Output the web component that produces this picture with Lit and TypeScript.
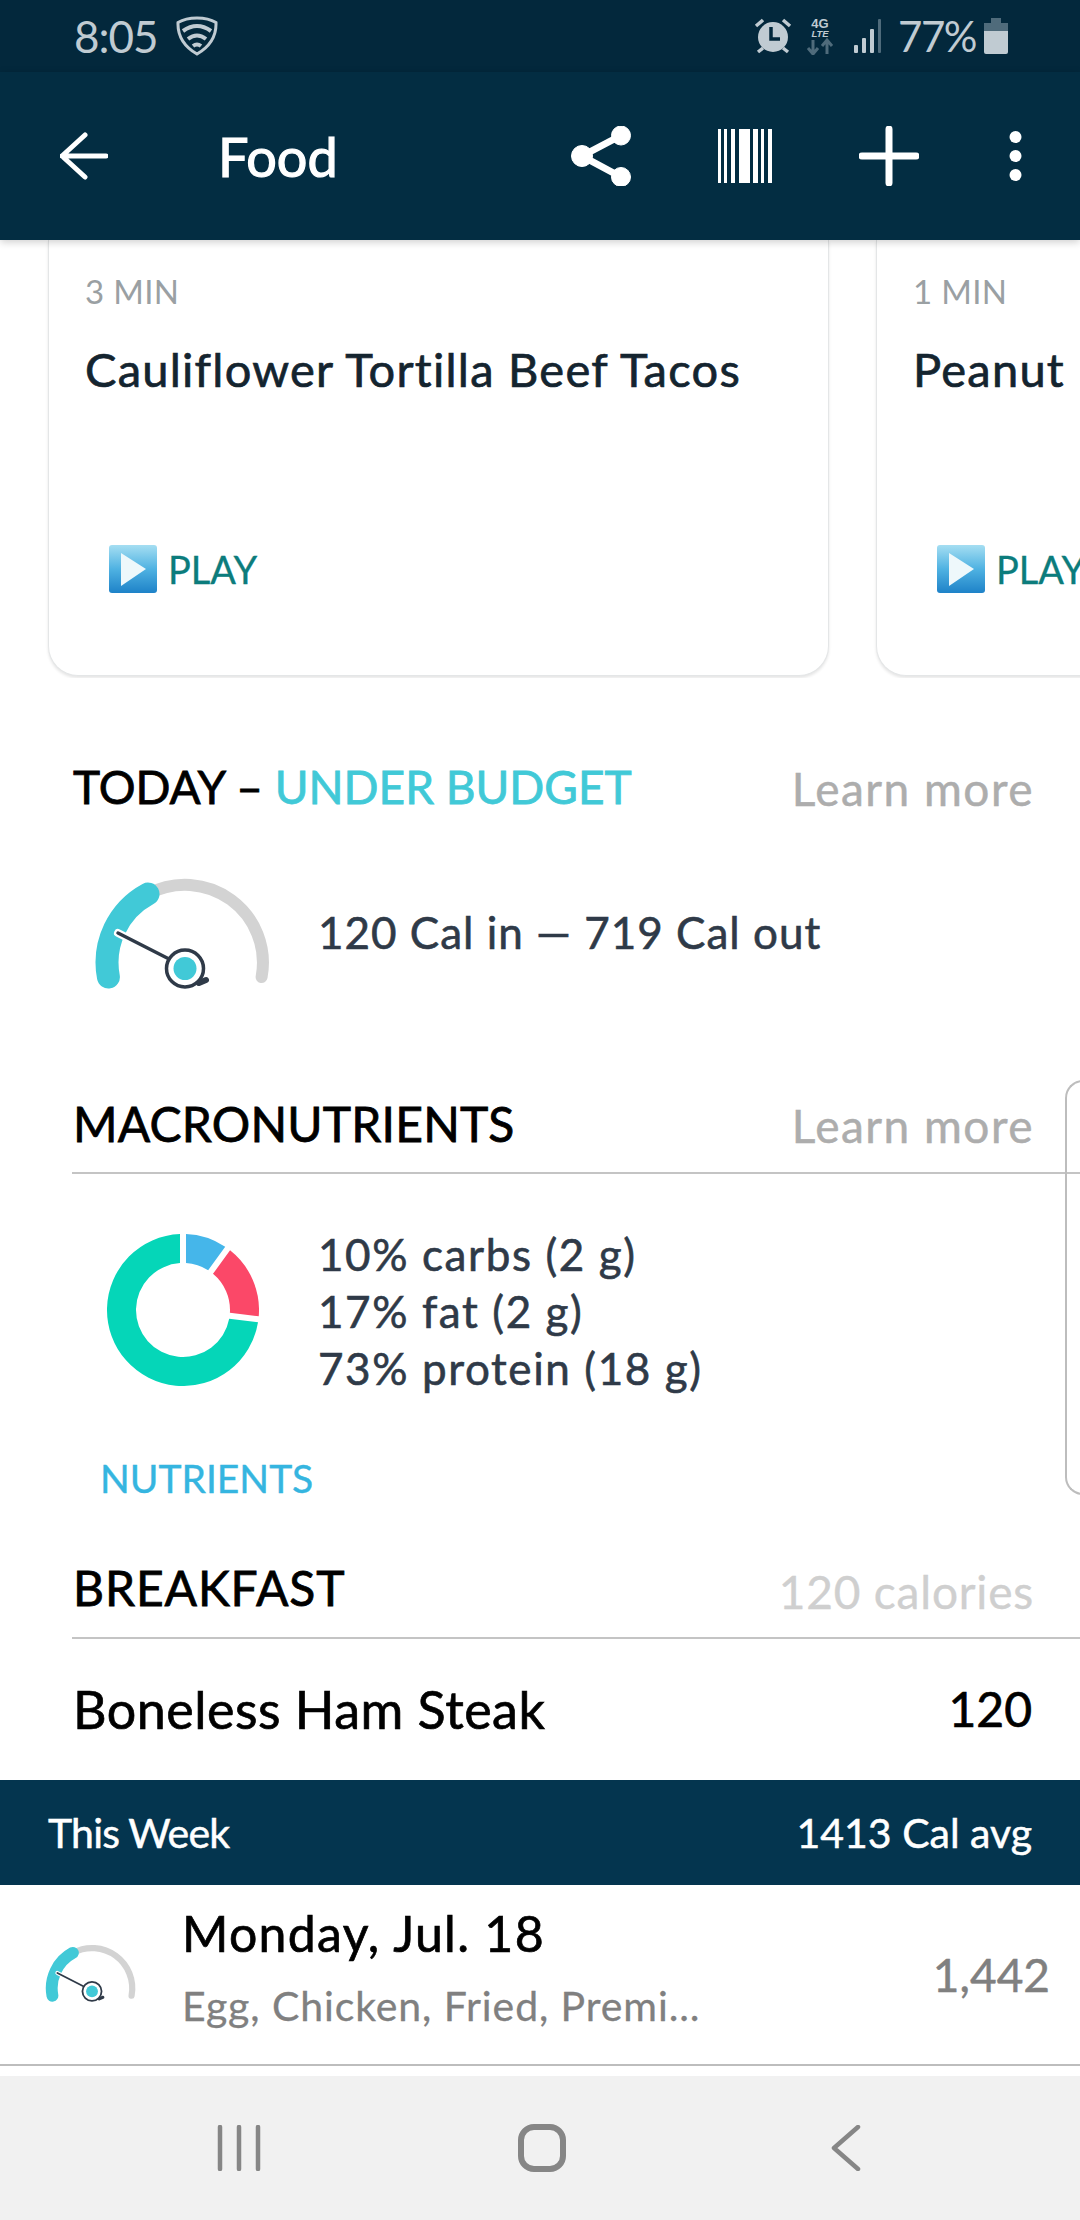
import { LitElement, html, css, svg } from "lit";
import { customElement } from "lit/decorators.js";

const gauge = (cls: string) => html`<svg class=${cls} viewBox="-90 -90 180 120">
  <path d="M76.6 14 A78 78 0 0 0 -37 -69" fill="none" stroke="#d3d3d3" stroke-width="12" stroke-linecap="round"/>
  <path d="M-76.6 14 A78 78 0 0 1 -37 -69" fill="none" stroke="#41c9d7" stroke-width="23" stroke-linecap="round"/>
  <path d="M-67 -30 L-12 -2" stroke="#fff" stroke-width="8" stroke-linecap="round"/>
  <path d="M-67 -30 L-12 -2" stroke="#2f3a48" stroke-width="3.5" stroke-linecap="round"/>
  <path d="M14 20 L21 17" stroke="#2f3a48" stroke-width="6" stroke-linecap="round"/>
  <circle cx="0" cy="5.5" r="18.5" fill="#fff" stroke="#2f3a48" stroke-width="3.5"/>
  <circle cx="0" cy="5.5" r="11.5" fill="#41c9d7"/>
</svg>`;

const play = () => html`<svg class="play-ic" viewBox="0 0 48 48">
  <defs><linearGradient id="pg" x1="0" y1="0" x2="0" y2="1">
    <stop offset="0" stop-color="#a5def2"/><stop offset=".5" stop-color="#4fb2e2"/><stop offset="1" stop-color="#1e82c8"/>
  </linearGradient></defs>
  <rect width="48" height="48" rx="3" fill="url(#pg)"/>
  <path d="M13 8 L38 24 L13 41 Z" fill="#eef8fb" transform="translate(-1 0)"/>
</svg>`;

function arcSeg(a0: number, a1: number, gap: number) {
  const R = 76, r = 47;
  const p = (rad: number, deg: number) => {
    const t = (deg * Math.PI) / 180;
    return [rad * Math.sin(t), -rad * Math.cos(t)];
  };
  const ao = (gap / R) * 57.3, ai = (gap / r) * 57.3;
  const [x1, y1] = p(R, a0 + ao), [x2, y2] = p(R, a1 - ao), [x3, y3] = p(r, a1 - ai), [x4, y4] = p(r, a0 + ai);
  const big = a1 - a0 > 180 ? 1 : 0;
  return `M${x1} ${y1} A${R} ${R} 0 ${big} 1 ${x2} ${y2} L${x3} ${y3} A${r} ${r} 0 ${big} 0 ${x4} ${y4} Z`;
}

@customElement("app-root")
export class AppRoot extends LitElement {
  static styles = css`
    :host { display: block; width: 1080px; height: 2220px; overflow: hidden; background: #fff; font-family: "Lato", "Noto Sans", sans-serif; color: #000; }
    .page { display: flex; flex-direction: column; height: 2220px; }
    .status { height: 72px; flex: none; background: #03283c; color: #c0cbd2; display: flex; align-items: center; padding: 0 72px 0 74px; font-size: 44px; }
    .status .time { letter-spacing: -1px; width: 102px; }
    .status .sp { flex: 1; }
    .status svg { display: block; flex: none; }
    .pct { margin: 0 8px 0 13px; letter-spacing: -1.5px; font-size: 42px; }
    .four { margin-left: 13px; }
    .sig { margin-left: 19px; }
    .appbar { height: 168px; flex: none; background: #032d42; display: flex; align-items: center; padding: 0 58px 0 60px; color: #fff; position: relative; z-index: 2; box-shadow: 0 2px 8px rgba(0,0,0,.2); }
    .appbar svg { display: block; flex: none; }
    .title { flex: 1; margin-left: 110px; font-size: 54px; font-weight: 400; letter-spacing: 0; -webkit-text-stroke: 1.2px #fff; }
    .bar-ic { margin-left: 87px; }
    .plus-ic { margin-left: 87px; }
    .dots-ic { margin-left: 90px; }
    .main { flex: 1; position: relative; overflow: hidden; min-height: 0; }
    .carousel { height: 438px; display: flex; gap: 47px; padding-left: 48px; overflow: hidden; }
    .card { flex: none; width: 781px; height: 436px; box-sizing: border-box; background: #fff; border: 1px solid #e4e6e7; border-top: 0; border-radius: 0 0 30px 30px; box-shadow: 0 2px 3px rgba(0,0,0,.1); padding: 29px 0 0 36px; display: flex; flex-direction: column; }
    .min { font-size: 33px; line-height: 44px; color: #9aa0a3; letter-spacing: .3px; }
    .name { font-size: 47px; line-height: 60px; margin-top: 26px; color: #14242f; white-space: nowrap; letter-spacing: 1.25px; -webkit-text-stroke: .7px #14242f; }
    .playrow { display: flex; align-items: center; margin: 146px 0 0 24px; color: #0c7c7c; font-size: 38px; gap: 11px; -webkit-text-stroke: .3px #0c7c7c; }
    .play-ic { width: 48px; height: 48px; flex: none; display: block; }
    .head { display: flex; justify-content: space-between; align-items: center; padding: 0 48px 0 73px; height: 60px; font-size: 48px; -webkit-text-stroke: .8px #000; white-space: nowrap; }
    .head .more { font-size: 46px; color: #adadad; -webkit-text-stroke: .5px #adadad; letter-spacing: 1.5px; padding-top: 4px; margin-right: -2px; }
    .today { margin-top: 78px; font-size: 46px; }
    .under { color: #41c9d7; -webkit-text-stroke: .8px #41c9d7; }
    .gauge-row { display: flex; align-items: flex-start; gap: 43px; padding-left: 95px; margin-top: 57px; height: 120px; }
    .gauge-big { width: 180px; height: 120px; flex: none; display: block; }
    .body { font-size: 44px; color: #2f3a48; -webkit-text-stroke: .6px #2f3a48; line-height: 57px; white-space: nowrap; }
    .gauge-row .body { margin-top: 31px; letter-spacing: 1px; }
    .macro { margin-top: 100px; letter-spacing: .2px; }
    .rule { height: 2px; background: #c4c4c4; margin: 19px 0 0 72px; }
    .macro-row { display: flex; gap: 59px; padding-left: 107px; margin-top: 60px; align-items: flex-start; }
    .donut { width: 152px; height: 152px; flex: none; display: block; }
    .macro-row .body { margin-top: -8px; letter-spacing: 1.6px; }
    .nutr { color: #35b5e0; font-size: 39px; line-height: 50px; margin: 56px 0 0 100px; -webkit-text-stroke: .4px #35b5e0; }
    .bk { margin-top: 54px; letter-spacing: .9px; }
    .bk .more { color: #cfcfcf; -webkit-text-stroke: .4px #cfcfcf; letter-spacing: .8px; padding-top: 8px; }
    .bk + .rule { margin-top: 20px; }
    .food { display: flex; justify-content: space-between; align-items: center; padding: 0 48px 0 73px; height: 60px; margin-top: 40px; font-size: 52px; letter-spacing: .5px; -webkit-text-stroke: .7px #000; white-space: nowrap; }
    .food .num { font-size: 48px; letter-spacing: 0; padding-bottom: 2px; }
    .side { position: absolute; left: 1065px; top: 840px; width: 40px; height: 415px; box-sizing: border-box; border: 2px solid #bdbdbd; border-right: 0; border-radius: 18px 0 0 18px; }
    .week { height: 105px; flex: none; background: #04354f; color: #fff; display: flex; justify-content: space-between; align-items: center; padding: 0 48px; font-size: 41px; white-space: nowrap; -webkit-text-stroke: .5px #fff; }
    .week .wk { letter-spacing: -.8px; }
    .day { height: 181px; flex: none; box-sizing: border-box; border-bottom: 2px solid #bdbdbd; display: flex; align-items: center; padding: 0 30px 0 45px; }
    .gauge-small { width: 94px; height: 62px; flex: none; display: block; margin-top: -4px; }
    .day-txt { flex: 1; margin: 0 0 16px 43px; display: flex; flex-direction: column; gap: 18px; white-space: nowrap; }
    .day-t { font-size: 50px; line-height: 60px; letter-spacing: 1.3px; -webkit-text-stroke: .7px #000; }
    .day-s { font-size: 41px; line-height: 50px; color: #808080; letter-spacing: .9px; -webkit-text-stroke: .3px #808080; }
    .day-n { font-size: 46px; color: #808080; -webkit-text-stroke: .5px #808080; }
    .gap { height: 10px; flex: none; background: #fff; }
    .nav { height: 144px; flex: none; background: #f1f1f1; display: flex; align-items: center; padding: 0 0 0 217px; }
    .nav svg { display: block; flex: none; }
    .home { margin-left: 257px; }
    .chev { margin-left: 265px; }
  `;

  render() {
    const D = "#4f6b7b";
    return html`<div class="page">
      <div class="status">
        <span class="time">8:05</span>
        <svg width="42" height="40" viewBox="0 0 42 40" fill="none" stroke="#c0cbd2">
          <path d="M21 2C28 2 35 3.5 40 6.5C40.5 20 33 31 21 38C9 31 1.5 20 2 6.5C7 3.500 14 2 21 2Z" stroke-width="3"/>
          <path d="M7 15Q21 5 35 15" stroke-width="4"/><path d="M12 23Q21 16 30 23" stroke-width="4"/><path d="M17 30Q21 27 25 30" stroke-width="4"/>
        </svg>
        <span class="sp"></span>
        <svg width="40" height="38" viewBox="0 0 40 38">
          <circle cx="20" cy="20" r="15" fill="#c0cbd2"/>
          <path d="M18 10V22H27" fill="none" stroke="#03283c" stroke-width="3.500"/>
          <path d="M3 9L10 3M37 9L30 3M5 35L10 31M35 35L30 31" stroke="#c0cbd2" stroke-width="3.500"/>
        </svg>
        <svg class="four" width="28" height="38" viewBox="0 0 28 38">
          <text x="14" y="11" text-anchor="middle" font-size="13" font-weight="700" fill="#c0cbd2" font-family="Liberation Sans">4G</text>
          <text x="14" y="20" text-anchor="middle" font-size="9.500" font-weight="700" font-style="italic" fill="#c0cbd2" font-family="Liberation Sans">LTE</text>
          <path d="M7 23V36M2 31L7 37L12 31M21 37V24M16 29L21 23L26 29" fill="none" stroke=${D} stroke-width="3"/>
        </svg>
        <svg class="sig" width="32" height="36" viewBox="0 0 32 36">
          <rect x="1" y="27" width="4" height="8" rx="1" fill="#c0cbd2"/><rect x="9" y="20" width="4" height="15" rx="1" fill="#c0cbd2"/>
          <rect x="17" y="11" width="4" height="24" rx="1" fill="#c0cbd2"/><rect x="25" y="1" width="3" height="34" rx="1" fill=${D}/>
        </svg>
        <span class="pct">77%</span>
        <svg width="24" height="36" viewBox="0 0 24 36">
          <path d="M7 0H17V5H24V13H0V5H7Z" fill=${D}/><path d="M0 13H24V34Q24 36 22 36H2Q0 36 0 34Z" fill="#c0cbd2"/>
        </svg>
      </div>

      <div class="appbar">
        <svg width="48" height="48" viewBox="0 0 48 48" fill="none" stroke="#fff" stroke-width="5" stroke-linecap="round" stroke-linejoin="round">
          <path d="M25 3L2 24L25 45M2 24H46"/>
        </svg>
        <div class="title">Food</div>
        <svg width="60" height="60" viewBox="0 0 60 60" fill="#fff" stroke="#fff">
          <path d="M50 9.500L11 30L50 51" fill="none" stroke-width="7"/>
          <circle cx="50" cy="9.500" r="9.500"/><circle cx="11" cy="30" r="10.500"/><circle cx="50" cy="51" r="9.500"/>
        </svg>
        <svg class="bar-ic" width="54" height="54" viewBox="0 0 54 54" fill="#fff">
          ${[[0,3],[6,3],[13,4],[21,11],[35,5],[43,3],[50,4]].map(([x,w]) => svg`<rect x=${x} width=${w} height="54"/>`)}
        </svg>
        <svg class="plus-ic" width="60" height="60" viewBox="0 0 60 60" stroke="#fff" stroke-width="7" stroke-linecap="round">
          <path d="M30 3V57M3 30H57"/>
        </svg>
        <svg class="dots-ic" width="13" height="50" viewBox="0 0 13 50" fill="#fff">
          <circle cx="6.500" cy="6" r="6"/><circle cx="6.500" cy="25" r="6"/><circle cx="6.500" cy="44" r="6"/>
        </svg>
      </div>

      <div class="main">
        <div class="carousel">
          <div class="card">
            <div class="min">3 MIN</div>
            <div class="name">Cauliflower Tortilla Beef Tacos</div>
            <div class="playrow">${play()}<span>PLAY</span></div>
          </div>
          <div class="card">
            <div class="min">1 MIN</div>
            <div class="name">Peanut Butter Cookies</div>
            <div class="playrow">${play()}<span>PLAY</span></div>
          </div>
        </div>

        <div class="head today">
          <span>TODAY – <span class="under">UNDER BUDGET</span></span>
          <span class="more">Learn more</span>
        </div>
        <div class="gauge-row">
          ${gauge("gauge-big")}
          <div class="body">120 Cal in — 719 Cal out</div>
        </div>

        <div class="head macro"><span>MACRONUTRIENTS</span><span class="more">Learn more</span></div>
        <div class="rule"></div>
        <div class="macro-row">
          <svg class="donut" viewBox="-76 -76 152 152">
            <path d=${arcSeg(0, 36, 3)} fill="#45b6ea"/>
            <path d=${arcSeg(36, 97, 3)} fill="#fb4868"/>
            <path d=${arcSeg(97, 360, 3)} fill="#05d6b8"/>
          </svg>
          <div class="body">10% carbs (2 g)<br />17% fat (2 g)<br />73% protein (18 g)</div>
        </div>
        <div class="nutr">NUTRIENTS</div>

        <div class="head bk"><span>BREAKFAST</span><span class="more">120 calories</span></div>
        <div class="rule"></div>
        <div class="food"><span>Boneless Ham Steak</span><span class="num">120</span></div>

        <div class="side"></div>
      </div>

      <div class="week"><span class="wk">This Week</span><span>1413 Cal avg</span></div>
      <div class="day">
        ${gauge("gauge-small")}
        <div class="day-txt">
          <div class="day-t">Monday, Jul. 18</div>
          <div class="day-s">Egg, Chicken, Fried, Premi...</div>
        </div>
        <div class="day-n">1,442</div>
      </div>
      <div class="gap"></div>
      <div class="nav">
        <svg width="44" height="46" viewBox="0 0 44 46" stroke="#868686" stroke-width="4.500" stroke-linecap="round">
          <path d="M3 2V44M22 2V44M41 2V44"/>
        </svg>
        <svg class="home" width="48" height="48" viewBox="0 0 48 48" fill="none" stroke="#868686" stroke-width="6">
          <rect x="3" y="3" width="42" height="42" rx="13"/>
        </svg>
        <svg class="chev" width="30" height="46" viewBox="0 0 30 46" fill="none" stroke="#868686" stroke-width="4.500" stroke-linecap="round" stroke-linejoin="round">
          <path d="M27 2L3 23L27 44"/>
        </svg>
      </div>
    </div>`;
  }
}
